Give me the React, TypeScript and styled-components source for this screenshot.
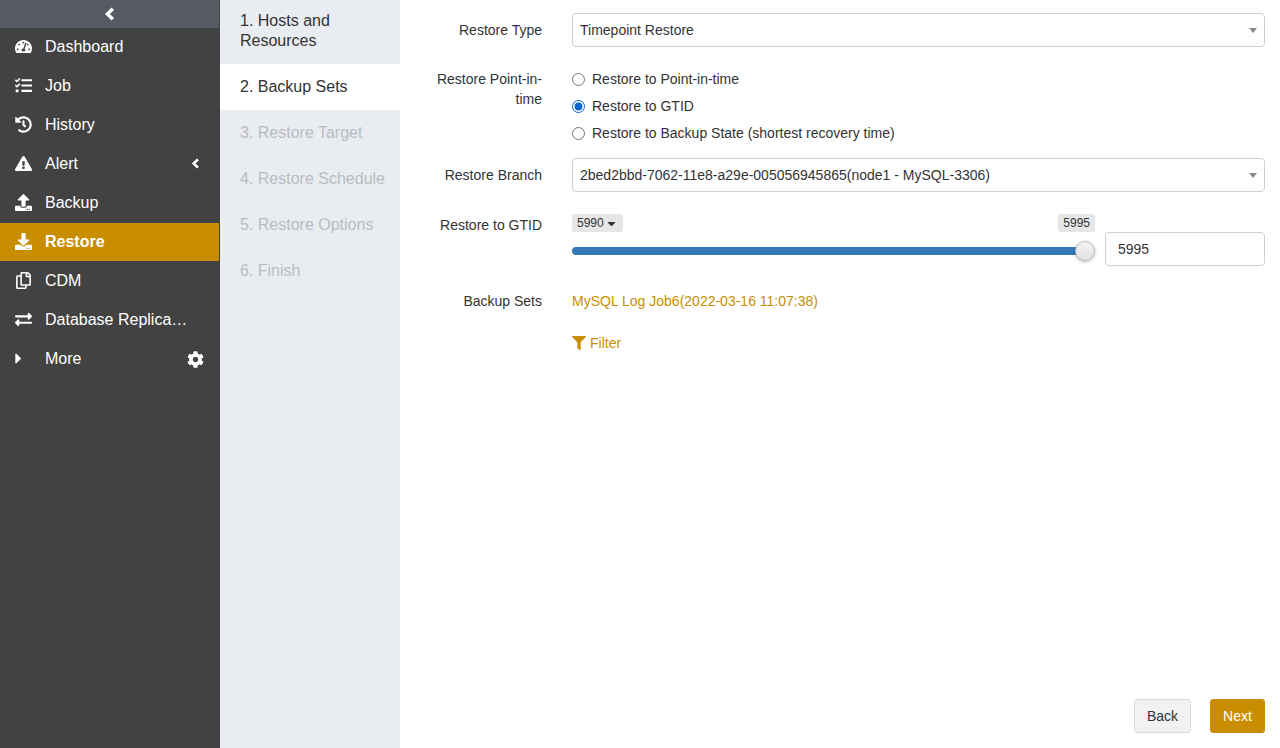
import styled, { createGlobalStyle } from "styled-components";
import {
  FaCaretDown,
  FaCaretRight,
  FaCog,
  FaDownload,
  FaExchangeAlt,
  FaExclamationTriangle,
  FaFilter,
  FaHistory,
  FaRegCopy,
  FaTachometerAlt,
  FaTasks,
  FaUpload,
} from "react-icons/fa";

const gold = "#c98e00";

const GlobalStyle = createGlobalStyle`
  html, body {
    margin: 0;
    height: 100%;
    background: #fff;
    overflow: hidden;
  }
  * { box-sizing: border-box; }
  body {
    font-family: "Liberation Sans", Arial, sans-serif;
    font-size: 14px;
    color: #333;
  }
`;

const Page = styled.div`
  display: flex;
  width: 1280px;
  height: 748px;
`;

const Sidebar = styled.aside`
  width: 220px;
  flex: none;
  background: #424242;
  color: #fff;
`;

const Collapse = styled.div`
  height: 28px;
  margin-right: 1px;
  background: #555a64;
  display: flex;
  align-items: center;
  justify-content: center;
`;

const MenuItem = styled.div<{ $active?: boolean }>`
  height: 38px;
  margin: 0 1px 1px 0;
  display: flex;
  align-items: center;
  padding: 0 16px 1px 15px;
  font-size: 16px;
  font-weight: ${(p) => (p.$active ? "bold" : "normal")};
  background: ${(p) => (p.$active ? gold : "transparent")};
`;

const MenuIcon = styled.span`
  width: 30px;
  flex: none;
  display: flex;
  align-items: center;
  font-size: 17px;
`;

const CaretIcon = styled(MenuIcon)`
  margin-left: -5px;
  width: 35px;
`;

const MenuLabel = styled.span`
  flex: 1;
  min-width: 0;
  max-width: 143px;
  white-space: nowrap;
  overflow: hidden;
  text-overflow: ellipsis;
`;

const MenuEnd = styled.span`
  margin-left: auto;
  flex: none;
  display: flex;
  align-items: center;
  margin-right: 3px;
`;

const GearEnd = styled(MenuEnd)`
  font-size: 17px;
  margin-right: -1px;
  padding-top: 1px;
`;

const Steps = styled.nav`
  width: 180px;
  flex: none;
  background: #e9ecf1;
`;

const Step = styled.div<{ $state: "done" | "active" | "todo" }>`
  padding: 13px 10px 0 20px;
  font-size: 16px;
  line-height: 20px;
  height: ${(p) => (p.$state === "done" ? "64px" : "46px")};
  padding-top: ${(p) => (p.$state === "done" ? "11px" : "13px")};
  padding-right: ${(p) => (p.$state === "done" ? "20px" : "10px")};
  background: ${(p) => (p.$state === "active" ? "#fff" : "transparent")};
  color: ${(p) => (p.$state === "todo" ? "#b9bcc2" : "#333")};
`;

const Main = styled.main`
  flex: 1;
  min-width: 0;
  display: flex;
  flex-direction: column;
  padding: 13px 15px 15px 0;
`;

const Form = styled.div`
  flex: 1;
  display: flex;
  flex-direction: column;
`;

const Row = styled.div<{ $gap: number }>`
  display: flex;
  gap: 30px;
  margin-bottom: ${(p) => p.$gap}px;
`;

const Label = styled.div`
  width: 142px;
  flex: none;
  text-align: right;
  line-height: 20px;
  padding-top: 7px;
`;

const TallLabel = styled(Label)`
  padding-top: 9px;
  padding-left: 30px;
`;

const Control = styled.div`
  flex: 1;
  min-width: 0;
`;

const Select = styled.div`
  height: 34px;
  border: 1px solid #ccd0d9;
  border-radius: 4px;
  padding: 0 7px;
  display: flex;
  align-items: center;
  justify-content: space-between;
  background: #fff;
`;

const SelectArrow = styled.span`
  width: 0;
  height: 0;
  border-left: 4px solid transparent;
  border-right: 4px solid transparent;
  border-top: 5px solid #888;
`;

const Radios = styled.div`
  display: flex;
  flex-direction: column;
  gap: 7px;
  padding-top: 9px;
`;

const RadioRow = styled.label`
  display: flex;
  align-items: center;
  gap: 7px;
  height: 20px;
`;

const RadioMark = styled.input`
  width: 13px;
  height: 13px;
  margin: 0;
  accent-color: #0a66d0;
`;

const SliderRow = styled.div`
  display: flex;
  gap: 10px;
`;

const SliderBox = styled.div`
  flex: 1;
  min-width: 0;
  position: relative;
  height: 58px;
`;

const Tag = styled.span`
  position: absolute;
  top: 6px;
  height: 18px;
  padding: 0 5px;
  display: flex;
  align-items: center;
  gap: 1px;
  background: #e6e6e6;
  border-radius: 3px;
  font-size: 12px;
`;

const MinTag = styled(Tag)`
  left: 0;
`;

const MaxTag = styled(Tag)`
  right: 0;
`;

const Track = styled.div`
  position: absolute;
  left: 0;
  right: 4px;
  top: 39px;
  height: 8px;
  border-radius: 4px;
  background: #337ab7;
`;

const Thumb = styled.div`
  position: absolute;
  right: 0;
  top: 33px;
  width: 20px;
  height: 20px;
  border-radius: 50%;
  border: 1px solid #bdbdbd;
  background: linear-gradient(#f4f4f4, #e2e2e2);
  box-shadow: 0 1px 3px rgba(0, 0, 0, 0.3);
`;

const NumberBox = styled.div`
  width: 160px;
  height: 34px;
  margin-top: 24px;
  flex: none;
  border: 1px solid #ccd0d9;
  border-radius: 4px;
  padding: 0 12px;
  display: flex;
  align-items: center;
`;

const SetLink = styled.div`
  color: ${gold};
  line-height: 20px;
  padding-top: 7px;
`;

const FilterLink = styled.div`
  display: flex;
  align-items: center;
  gap: 4px;
  color: ${gold};
  margin-left: 172px;
  line-height: 20px;
  font-size: 14px;
`;

const Footer = styled.div`
  display: flex;
  justify-content: flex-end;
  gap: 19px;
`;

const Button = styled.button<{ $primary?: boolean }>`
  height: 34px;
  width: ${(p) => (p.$primary ? "55px" : "57px")};
  padding: 0;
  border-radius: 3px;
  font: inherit;
  color: ${(p) => (p.$primary ? "#fff" : "#333")};
  background: ${(p) => (p.$primary ? gold : "#f2f2f2")};
  border: 1px solid ${(p) => (p.$primary ? gold : "#dcdcdc")};
`;

// the bundled FA chevron is thinner than the one in the app, so it is drawn here
const Chevron = ({ size }: { size: number }) => (
  <svg width={size * 0.8} height={size} viewBox="0 0 8 10" aria-hidden="true">
    <path d="M6.3 1.2 2.4 5l3.9 3.8" fill="none" stroke="#fff" strokeWidth="2.4" />
  </svg>
);

const menu = [
  { label: "Dashboard", icon: <FaTachometerAlt /> },
  { label: "Job", icon: <FaTasks /> },
  { label: "History", icon: <FaHistory /> },
  { label: "Alert", icon: <FaExclamationTriangle />, end: <Chevron size={11} /> },
  { label: "Backup", icon: <FaUpload /> },
  { label: "Restore", icon: <FaDownload />, active: true },
  { label: "CDM", icon: <FaRegCopy /> },
  { label: "Database Replication", icon: <FaExchangeAlt /> },
];

const steps: { label: string; state: "done" | "active" | "todo" }[] = [
  { label: "1. Hosts and Resources", state: "done" },
  { label: "2. Backup Sets", state: "active" },
  { label: "3. Restore Target", state: "todo" },
  { label: "4. Restore Schedule", state: "todo" },
  { label: "5. Restore Options", state: "todo" },
  { label: "6. Finish", state: "todo" },
];

const radios = [
  "Restore to Point-in-time",
  "Restore to GTID",
  "Restore to Backup State (shortest recovery time)",
];

export default function App() {
  return (
    <Page>
      <GlobalStyle />
      <Sidebar>
        <Collapse>
          <Chevron size={14} />
        </Collapse>
        {menu.map((item) => (
          <MenuItem key={item.label} $active={item.active}>
            <MenuIcon>{item.icon}</MenuIcon>
            <MenuLabel>{item.label}</MenuLabel>
            {item.end && <MenuEnd>{item.end}</MenuEnd>}
          </MenuItem>
        ))}
        <MenuItem>
          <CaretIcon>
            <FaCaretRight />
          </CaretIcon>
          <MenuLabel>More</MenuLabel>
          <GearEnd>
            <FaCog />
          </GearEnd>
        </MenuItem>
      </Sidebar>

      <Steps>
        {steps.map((s) => (
          <Step key={s.label} $state={s.state}>
            {s.label}
          </Step>
        ))}
      </Steps>

      <Main>
        <Form>
          <Row $gap={13}>
            <Label>Restore Type</Label>
            <Control>
              <Select>
                Timepoint Restore
                <SelectArrow />
              </Select>
            </Control>
          </Row>
          <Row $gap={15}>
            <TallLabel>Restore Point-in-time</TallLabel>
            <Control>
              <Radios>
                {radios.map((r, i) => (
                  <RadioRow key={r}>
                    <RadioMark type="radio" name="point" defaultChecked={i === 1} />
                    {r}
                  </RadioRow>
                ))}
              </Radios>
            </Control>
          </Row>
          <Row $gap={16}>
            <Label>Restore Branch</Label>
            <Control>
              <Select>
                2bed2bbd-7062-11e8-a29e-005056945865(node1 - MySQL-3306)
                <SelectArrow />
              </Select>
            </Control>
          </Row>
          <Row $gap={18}>
            <Label>Restore to GTID</Label>
            <Control>
              <SliderRow>
                <SliderBox>
                  <MinTag>
                    5990 <FaCaretDown size={13} />
                  </MinTag>
                  <MaxTag>5995</MaxTag>
                  <Track />
                  <Thumb />
                </SliderBox>
                <NumberBox>5995</NumberBox>
              </SliderRow>
            </Control>
          </Row>
          <Row $gap={22}>
            <Label>Backup Sets</Label>
            <Control>
              <SetLink>MySQL Log Job6(2022-03-16 11:07:38)</SetLink>
            </Control>
          </Row>
          <FilterLink>
            <FaFilter size={14} />
            Filter
          </FilterLink>
        </Form>
        <Footer>
          <Button>Back</Button>
          <Button $primary>Next</Button>
        </Footer>
      </Main>
    </Page>
  );
}
